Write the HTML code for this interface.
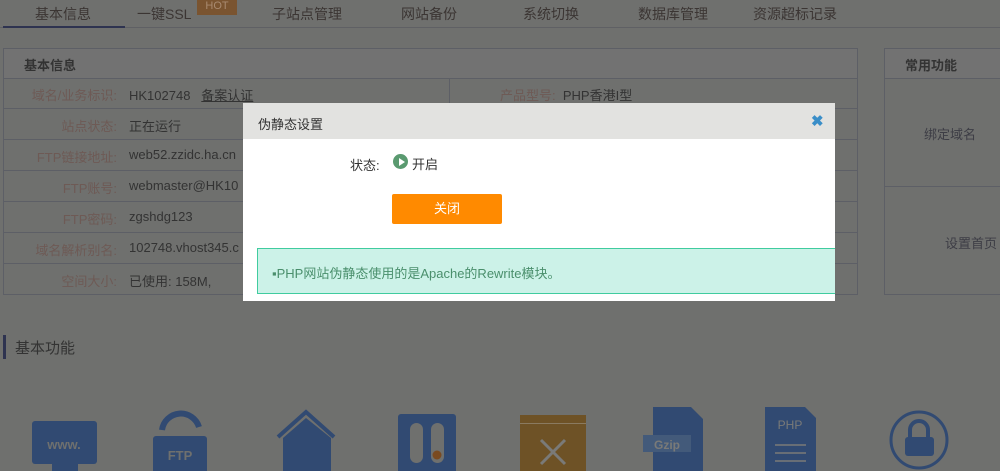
<!DOCTYPE html>
<html style="background:#6f706e"><head><meta charset="utf-8"><style>
*{margin:0;padding:0;box-sizing:border-box}
html,body{background:#6f706e}
body{width:1000px;height:471px;overflow:hidden;font-family:"Liberation Sans","Noto Sans CJK SC",sans-serif;font-size:13px;color:#383838;position:relative}
.a{position:absolute}
.nav span{position:absolute;top:4px;font-size:14px;color:#3b3533}
.lbl{position:absolute;color:#6e5a55;text-align:right;width:117px;left:0}
.val{position:absolute;left:129px;color:#333}
.hl{position:absolute;left:3px;width:855px;height:1px;background:#5d5f66}
</style></head><body>
<div class="a" style="left:0;top:0;width:1000px;height:471px;background:#6f706e"></div>
<div class="nav">
<span style="left:35px">基本信息</span>
<span style="left:137px">一键SSL</span>
<span style="left:272px">子站点管理</span>
<span style="left:401px">网站备份</span>
<span style="left:523px">系统切换</span>
<span style="left:638px">数据库管理</span>
<span style="left:753px">资源超标记录</span>
</div>
<div class="a" style="left:197px;top:0;width:40px;height:15px;background:#7a5430;color:#a88a70;font-size:11px;text-align:center;line-height:12px">HOT</div>
<div class="a" style="left:0;top:27px;width:1000px;height:1px;background:#5f6064"></div>
<div class="a" style="left:3px;top:26px;width:122px;height:2px;background:#2e3350"></div>

<div class="a" style="left:3px;top:48px;width:855px;height:247px;border:1px solid #5d5f66"></div>
<div class="a" style="left:4px;top:49px;width:853px;height:29px;background:#727272"></div>
<div class="a" style="left:24px;top:55px;font-weight:bold;color:#333">基本信息</div>
<div class="hl" style="top:78px"></div><div class="hl" style="top:108px"></div><div class="hl" style="top:139px"></div><div class="hl" style="top:170px"></div><div class="hl" style="top:201px"></div><div class="hl" style="top:232px"></div><div class="hl" style="top:263px"></div>
<div class="a" style="left:449px;top:78px;width:1px;height:216px;background:#5d5f66"></div>
<div class="lbl" style="top:85px">域名/业务标识:</div><div class="val" style="top:85px">HK102748 &nbsp;&nbsp;<u>备案认证</u></div>
<div class="lbl" style="top:116px">站点状态:</div><div class="val" style="top:116px">正在运行</div>
<div class="lbl" style="top:147px">FTP链接地址:</div><div class="val" style="top:147px">web52.zzidc.ha.cn</div>
<div class="lbl" style="top:178px">FTP账号:</div><div class="val" style="top:178px">webmaster@HK10</div>
<div class="lbl" style="top:209px">FTP密码:</div><div class="val" style="top:209px">zgshdg123</div>
<div class="lbl" style="top:240px">域名解析别名:</div><div class="val" style="top:240px">102748.vhost345.c</div>
<div class="lbl" style="top:271px">空间大小:</div><div class="val" style="top:271px">已使用: 158M,</div>
<div class="a" style="left:500px;top:85px;color:#6e5a55">产品型号: <span style="color:#333">&nbsp;PHP香港I型</span></div>

<div class="a" style="left:884px;top:48px;width:130px;height:247px;border:1px solid #5d5f66"></div>
<div class="a" style="left:885px;top:49px;width:120px;height:29px;background:#727272"></div>
<div class="hl" style="left:884px;width:120px;top:78px"></div>
<div class="hl" style="left:884px;width:120px;top:186px"></div>
<div class="a" style="left:905px;top:55px;font-weight:bold;color:#333">常用功能</div>
<div class="a" style="left:924px;top:124px;color:#3d3d45">绑定域名</div>
<div class="a" style="left:945px;top:233px;color:#3d3d45">设置首页</div>

<div class="a" style="left:3px;top:335px;width:3px;height:24px;background:#2e3350"></div>
<div class="a" style="left:15px;top:337px;font-size:15px;color:#333">基本功能</div>

<svg class="a" style="left:0;top:400px" width="1000" height="71">
<g fill="#314a72">
<rect x="32" y="21" width="65" height="43" rx="3"/><rect x="52" y="64" width="26" height="7"/>
<text x="64" y="49" font-size="13" fill="#6f706e" text-anchor="middle" font-family="Liberation Sans" font-weight="bold">www.</text>
<path d="M162 30 A19 19 0 0 1 199 27" fill="none" stroke="#314a72" stroke-width="6"/>
<rect x="153" y="36" width="54" height="40" rx="3"/>
<text x="180" y="60" font-size="13" fill="#6f706e" text-anchor="middle" font-weight="bold" font-family="Liberation Sans">FTP</text>
<path d="M278 37 L306 12 L334 37" fill="none" stroke="#314a72" stroke-width="4"/>
<path d="M283 38 L306 18 L331 38 V71 H283Z"/>
<rect x="398" y="14" width="58" height="60" rx="3"/>
<rect x="410" y="23" width="13" height="40" rx="6.5" fill="#6f706e"/><rect x="431" y="23" width="13" height="40" rx="6.5" fill="#6f706e"/>
<circle cx="437" cy="55" r="4.5" fill="#7a4a20"/>
<rect x="520" y="15" width="66" height="60" fill="#6e5226"/><rect x="520" y="23" width="66" height="1" fill="#8a7a60"/>
<path d="M541 40 L565 64 M565 40 L541 64" stroke="#7a7a78" stroke-width="3"/>
<path d="M653 7 H691 L703 19 V71 H653Z"/>
<rect x="643" y="35" width="48" height="17" fill="#435a7a"/>
<text x="667" y="49" font-size="12" fill="#7a7a78" text-anchor="middle" font-family="Liberation Sans" font-weight="bold">Gzip</text>
<path d="M765 7 H805 L816 18 V71 H765Z"/>
<text x="790" y="29" font-size="12" fill="#7a7a78" text-anchor="middle" font-family="Liberation Sans">PHP</text>
<path d="M775 45 H806 M775 53 H806 M775 61 H806" stroke="#7a7a78" stroke-width="1.5"/>
<circle cx="919" cy="40" r="28" fill="none" stroke="#314a72" stroke-width="3"/>
<path d="M910 38 V30 A9 9 0 0 1 928 30 V38" fill="none" stroke="#314a72" stroke-width="4"/>
<rect x="905" y="37" width="29" height="19" rx="3"/>
</g></svg>

<div class="a" style="left:243px;top:103px;width:592px;height:198px;background:#fff"></div>
<div class="a" style="left:243px;top:103px;width:592px;height:36px;background:#e2e2e0"></div>
<div class="a" style="left:258px;top:114px;font-size:13px;color:#333">伪静态设置</div>
<div class="a" style="left:811px;top:112px;font-size:15px;font-weight:bold;color:#3a8ec8">✖</div>
<div class="a" style="left:350px;top:155px;color:#333">状态:</div>
<div class="a" style="left:393px;top:154px;width:15px;height:15px;border-radius:50%;background:#5a9a70"></div>
<div class="a" style="left:399px;top:158px;width:0;height:0;border-left:6px solid #fff;border-top:4px solid transparent;border-bottom:4px solid transparent"></div>
<div class="a" style="left:412px;top:154px;color:#333">开启</div>
<div class="a" style="left:392px;top:194px;width:110px;height:30px;background:#ff8a00;color:#fff;text-align:center;line-height:30px;border-radius:2px">关闭</div>
<div class="a" style="left:257px;top:248px;width:578px;height:46px;background:#ccf2e8;border:1px solid #40cc9f;border-right:none"></div>
<div class="a" style="left:272px;top:263px;color:#4a8f6c">▪PHP网站伪静态使用的是Apache的Rewrite模块。</div>
</body></html>
